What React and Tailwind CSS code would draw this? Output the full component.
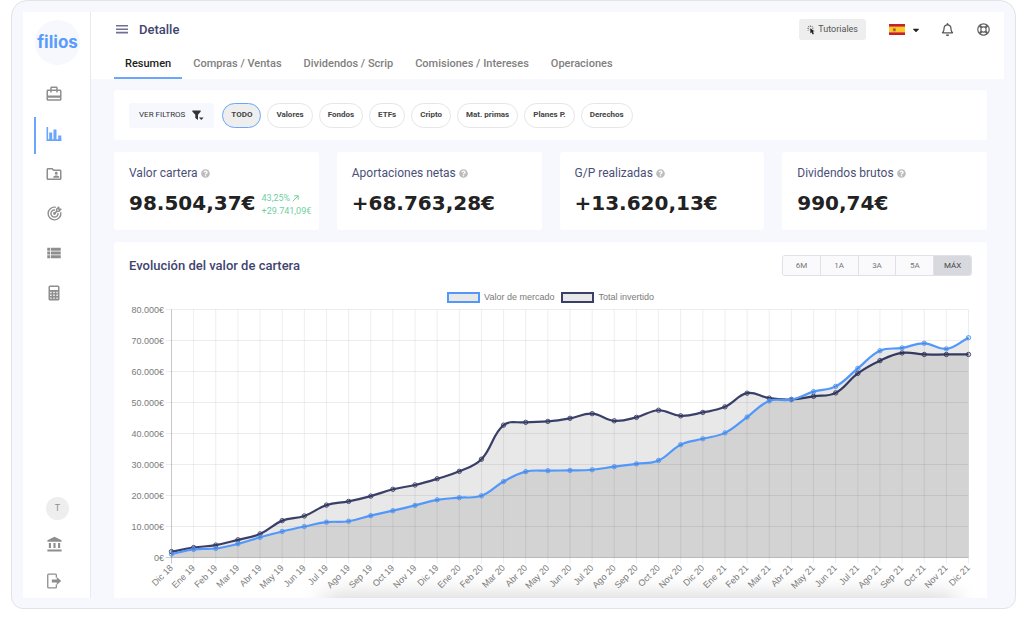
import { useState } from 'react';
import { FaRegLifeRing, FaCaretDown, FaQuestionCircle, FaRegBell } from 'react-icons/fa';
import { MdCardTravel, MdOutlineFolderShared, MdViewList, MdAccountBalance } from 'react-icons/md';
import { TbTargetArrow } from 'react-icons/tb';

const TABS = ['Resumen', 'Compras / Ventas', 'Dividendos / Scrip', 'Comisiones / Intereses', 'Operaciones'];
const FILTERS = ['TODO', 'Valores', 'Fondos', 'ETFs', 'Cripto', 'Mat. primas', 'Planes P.', 'Derechos'];
const RANGES = ['6M', '1A', '3A', '5A', 'MÁX'];

const KPIS = [
  { label: 'Valor cartera', value: '98.504,37€', percent: '43,25%', diff: '+29.741,09€' },
  { label: 'Aportaciones netas', value: '+68.763,28€' },
  { label: 'G/P realizadas', value: '+13.620,13€' },
  { label: 'Dividendos brutos', value: '990,74€' },
];

const MONTHS = ['Ene', 'Feb', 'Mar', 'Abr', 'May', 'Jun', 'Jul', 'Ago', 'Sep', 'Oct', 'Nov', 'Dic'];
const LABELS = ['Dic 18', ...[19, 20, 21].flatMap((y) => MONTHS.map((m) => `${m} ${y}`))];

// thousands of euros, one value per month
const MERCADO = [
  1.1, 2.6, 2.9, 4.4, 6.5, 8.4, 10, 11.4, 11.7, 13.5, 15.1, 16.8, 18.6, 19.3, 19.9, 24.5, 27.7, 28, 28.1,
  28.3, 29.3, 30.2, 31.3, 36.4, 38.3, 40.2, 45.3, 50.5, 50.9, 53.5, 55.2, 61, 66.7, 67.6, 69.1, 67.3, 70.9,
];
const INVERTIDO = [
  1.9, 3.2, 4, 5.7, 7.6, 11.9, 13.4, 16.9, 18.1, 19.8, 22, 23.4, 25.4, 27.8, 31.7, 42.7, 43.6, 43.9, 44.9,
  46.4, 44.1, 45.2, 47.5, 45.7, 46.8, 48.6, 53, 51.4, 51, 52, 53.1, 59.4, 63.5, 66, 65.5, 65.5, 65.5,
];

const LEFT = 42.5;
const RIGHT = 839.5;
const TOP = 6.5;
const BOTTOM = 254.5;
const xAt = (i) => LEFT + (i * (RIGHT - LEFT)) / (LABELS.length - 1);
const yAt = (v) => BOTTOM - (v * (BOTTOM - TOP)) / 80;

// cardinal spline with a tension of 0.4
function smoothPath(values) {
  const pts = values.map((v, i) => [xAt(i), yAt(v)]);
  const ctrl = pts.map((p, i) => {
    const prev = pts[i - 1] || p;
    const next = pts[i + 1] || p;
    const d01 = Math.hypot(p[0] - prev[0], p[1] - prev[1]);
    const d12 = Math.hypot(next[0] - p[0], next[1] - p[1]);
    const fa = (0.4 * d01) / (d01 + d12);
    const fb = (0.4 * d12) / (d01 + d12);
    const dx = next[0] - prev[0];
    const dy = next[1] - prev[1];
    return { before: [p[0] - fa * dx, p[1] - fa * dy], after: [p[0] + fb * dx, p[1] + fb * dy] };
  });
  return pts
    .map((p, i) => (i === 0 ? `M${p}` : `C${ctrl[i - 1].after} ${ctrl[i].before} ${p}`))
    .join(' ');
}

function Series({ values, color }) {
  const line = smoothPath(values);
  return (
    <g>
      <path d={`${line} L${RIGHT},${BOTTOM} L${LEFT},${BOTTOM}Z`} fill="#000" fillOpacity="0.09" />
      <path d={line} fill="none" stroke={color} strokeWidth="2.2" />
      {values.map((v, i) => (
        <circle key={i} cx={xAt(i)} cy={yAt(v)} r="2.2" fill="#000" fillOpacity="0.1" stroke={color} strokeWidth="0.9" />
      ))}
    </g>
  );
}

function Chart() {
  return (
    <svg viewBox="0 0 843 295" className="block w-full" role="img" aria-label="Evolución del valor de cartera">
      {LABELS.map((l, i) => (
        <line key={l} x1={xAt(i)} x2={xAt(i)} y1={TOP} y2={BOTTOM + 6} stroke="#000" strokeOpacity={i === 0 ? 0.22 : 0.07} />
      ))}
      {[0, 10, 20, 30, 40, 50, 60, 70, 80].map((v) => (
        <g key={v}>
          <line x1={LEFT - 6} x2={RIGHT} y1={yAt(v)} y2={yAt(v)} stroke="#000" strokeOpacity={v === 0 ? 0.2 : 0.07} />
          <text x="35" y={yAt(v) + 3} textAnchor="end" className="fill-[#7a7a7a] font-['Liberation_Sans',sans-serif] text-[9px]">
            {v === 0 ? '0€' : `${v}.000€`}
          </text>
        </g>
      ))}
      <Series values={INVERTIDO} color="#3a3f69" />
      <Series values={MERCADO} color="#5298fb" />
      {LABELS.map((l, i) => (
        <text
          key={l}
          transform={`translate(${xAt(i) + 2} ${BOTTOM + 11}) rotate(-45)`}
          textAnchor="end"
          className="fill-[#7a7a7a] font-['Liberation_Sans',sans-serif] text-[9px]"
        >
          {l}
        </text>
      ))}
    </svg>
  );
}

function MenuIcon() {
  return (
    <svg width="12" height="9" viewBox="0 0 12 9" fill="#6d7193">
      <path d="M0 0h12v1.600H0zM0 3.400h12V5H0zM0 6.800h12v1.600H0z" />
    </svg>
  );
}

function HistogramIcon() {
  return (
    <svg width="16" height="16" viewBox="0 0 16 16" fill="currentColor">
      <path d="M.5 1h1.600v12.300H15.500v1.600H.5zM3.200 6.500h3v6.800h-3zM7.500 3.500h3v9.800h-3zM12.200 9.400h3.100v3.900h-3.100z" />
    </svg>
  );
}

function CalculatorIcon() {
  return (
    <svg width="16" height="16" viewBox="0 0 16 16" fill="currentColor">
      <path
        fillRule="evenodd"
        d="M4 .5h8A1.500 1.500 0 0 1 13.500 2v12a1.500 1.500 0 0 1-1.500 1.500H4A1.500 1.500 0 0 1 2.500 14V2A1.500 1.500 0 0 1 4 .5zM4 2v3h8V2zM4.200 6.800v1.400h1.400V6.800zM7.300 6.800v1.400h1.400V6.800zM10.400 6.800v1.400h1.400V6.800zM4.200 9.600V11h1.400V9.600zM7.300 9.600V11h1.400V9.600zM10.400 9.600V11h1.400V9.600zM4.200 12.400v1.400h1.400v-1.400zM7.300 12.400v1.400h1.400v-1.400zM10.400 12.400v1.400h1.400v-1.400z"
      />
    </svg>
  );
}

function ExitIcon() {
  return (
    <svg width="16" height="16" viewBox="0 0 16 16" fill="currentColor">
      <path d="M2.600.5h6.900a1.500 1.500 0 0 1 1.500 1.500v2.600H9.700V1.800H2.400v12.400h7.300v-2.800H11V14a1.500 1.500 0 0 1-1.500 1.500H2.600A1.500 1.500 0 0 1 1.100 14V2A1.500 1.500 0 0 1 2.600.5z" />
      <path d="M5.800 6.600h5V4l4.400 4-4.400 4V9.400h-5z" />
    </svg>
  );
}

function FunnelIcon() {
  return (
    <svg width="12" height="11" viewBox="0 0 12 11" fill="currentColor">
      <path d="M.3.500h8.400v.9L6 4.800v5.200L3.300 8V4.800L.3 1.400zM7 7.500h4.600L9.300 9.900z" />
    </svg>
  );
}

function ClickIcon() {
  return (
    <svg width="8" height="10" viewBox="0 0 8 10">
      <path d="M3.200 3.300 7.600 6.200l-1.700.4 1 2.100-1.300.7-1-2.100-1.200 1.100z" fill="#222" />
      <path d="M3.300.4v1.500M.4 3.300h1.500M1.200 1.200l1 1M5.500 1.100l-.9 1M1 5.600l1-1M6.500 3.200H5.200" stroke="#444" strokeWidth=".8" />
    </svg>
  );
}

function SpainFlag() {
  return (
    <svg width="16" height="11" viewBox="0 0 16 11">
      <rect width="16" height="11" fill="#c8202b" />
      <rect y="2.600" width="16" height="5.800" fill="#fcc92c" />
      <path d="M3.800 4.200h3.100v3.200H3.800z" fill="#c98a35" />
      <path d="M4.500 4.800h1.700v1.900H4.500z" fill="#9a4a35" />
    </svg>
  );
}

const NAV = [
  { name: 'Cartera', icon: <MdCardTravel size={18} /> },
  { name: 'Detalle', icon: <HistogramIcon />, active: true },
  { name: 'Carteras compartidas', icon: <MdOutlineFolderShared size={18} /> },
  { name: 'Objetivos', icon: <TbTargetArrow size={17} strokeWidth={2} /> },
  { name: 'Listado', icon: <MdViewList size={18} /> },
  { name: 'Calculadora', icon: <CalculatorIcon /> },
];

function Sidebar() {
  return (
    <aside className="flex w-[68px] shrink-0 flex-col border-r border-[#e9eaee] bg-white pt-2">
      <a
        href="#"
        className="ml-3 flex size-[45px] items-center justify-center rounded-full bg-[#f7f8fd] font-['Inter',sans-serif] text-[17px] font-bold text-[#5a9cfc]"
      >
        filios
      </a>
      <nav className="mt-[9px] flex h-[239px] flex-col">
        {NAV.map((item) => (
          <a key={item.name} href="#" aria-label={item.name} className={`flex flex-1 items-center ${item.active ? 'text-[#6ba6fb]' : 'text-[#8e8e8e]'}`}>
            <span className={`ml-[11px] h-[37px] w-[2px] self-end ${item.active ? 'bg-[#6ba6fb]' : ''}`} />
            <span className="flex w-9 justify-center">{item.icon}</span>
          </a>
        ))}
      </nav>
      <div className="mt-auto flex flex-col text-[#8e8e8e]">
        <button aria-label="Usuario" className="ml-[23px] flex size-[23px] items-center justify-center rounded-full bg-[#eeeeee] text-[9px]">
          T
        </button>
        <a href="#" aria-label="Bancos" className="ml-[13px] mt-1 flex h-10 w-9 items-center justify-center">
          <MdAccountBalance size={17} />
        </a>
        <button aria-label="Salir" className="ml-[13px] flex h-[34px] w-9 items-center justify-center">
          <ExitIcon />
        </button>
      </div>
    </aside>
  );
}

function Header({ tab, setTab }) {
  return (
    <header className="flex flex-col bg-white">
      <div className="flex h-[35px] items-center pl-[25px] pr-[14px]">
        <button aria-label="Menú">
          <MenuIcon />
        </button>
        <h1 className="ml-[11px] text-[13px] leading-5 font-medium text-[#3f4470]">Detalle</h1>
        <div className="ml-auto flex items-center">
          <button className="flex h-[21px] items-center gap-[3px] rounded-[3px] bg-[#eeeeee] px-2 text-[9px] text-[#555]">
            <ClickIcon />
            Tutoriales
          </button>
          <button aria-label="Idioma" className="ml-[23px] flex items-center gap-[6px] text-[#222]">
            <SpainFlag />
            <FaCaretDown size={10} />
          </button>
          <button aria-label="Notificaciones" className="ml-5 text-[#555]">
            <FaRegBell size={13} />
          </button>
          <button aria-label="Ayuda" className="ml-[23px] text-[#666]">
            <FaRegLifeRing size={13} />
          </button>
        </div>
      </div>
      <nav className="flex h-8 pl-[23px]">
        {TABS.map((t) => (
          <button
            key={t}
            onClick={() => setTab(t)}
            className={`border-b-2 px-[11px] pt-1 text-[11px] font-medium ${
              t === tab ? 'border-[#6ba6fb] text-[#222]' : 'border-transparent text-[#808080]'
            }`}
          >
            {t}
          </button>
        ))}
      </nav>
    </header>
  );
}

function Kpi({ label, value, percent, diff }) {
  return (
    <section className="h-[78px] rounded-[3px] bg-white pl-[15px] pt-[13px]">
      <h2 className="flex items-center gap-[3px] text-xs text-[#4a4f78]">
        {label}
        <FaQuestionCircle size={9} className="text-[#bcbcbc]" />
      </h2>
      <div className="mt-[7px] flex items-center gap-[6px]">
        <span className="font-['DejaVu_Sans',sans-serif] text-xl leading-[30px] font-bold text-[#222]">{value}</span>
        {percent && (
          <span className="pt-1 text-[9px] leading-[13px] text-[#6fcf9f]">
            <span className="flex items-center gap-[2px]">
              {percent}
              <svg width="7" height="7" viewBox="0 0 7 7" fill="none" stroke="currentColor">
                <path d="M.7 6.300 6.200.8M2.200.8h4v4" />
              </svg>
            </span>
            {diff}
          </span>
        )}
      </div>
    </section>
  );
}

function LegendItem({ label, box }) {
  return (
    <span className="flex items-center gap-1">
      <span className={`h-[11px] w-[33px] border-2 bg-[#e8e8e8] ${box}`} />
      {label}
    </span>
  );
}

export default function App() {
  const [tab, setTab] = useState('Resumen');
  const [filter, setFilter] = useState('TODO');
  const [range, setRange] = useState('MÁX');

  return (
    <div className="bg-white pb-[10px] pl-[11px] pr-2 font-['Roboto',sans-serif]">
      <div className="flex rounded-b-xl rounded-t-2xl border border-[#e2e3e5] bg-[#f7f8fd] px-[11px] pb-[10px] pt-[11px]">
        <Sidebar />
        <div className="min-w-0 flex-1">
          <Header tab={tab} setTab={setTab} />
          <main className="flex flex-col gap-3 pl-[23px] pr-[17px] pt-[11px]">
            <div className="flex h-[50px] items-center gap-[6px] rounded-[3px] bg-white px-[15px]">
              <button className="mr-[2px] flex h-[25px] items-center gap-[7px] rounded-[3px] bg-[#f7f8fd] px-[10px] text-[8px] text-[#333]">
                VER FILTROS
                <FunnelIcon />
              </button>
              {FILTERS.map((f) => (
                <button
                  key={f}
                  onClick={() => setFilter(f)}
                  className={`h-[25px] rounded-full border px-2 text-[8px] font-bold text-[#444] ${
                    f === filter ? 'border-[#6ba6fb] bg-[#eeeeee]' : 'border-[#e6e6e6] bg-white'
                  }`}
                >
                  {f}
                </button>
              ))}
            </div>

            <div className="grid grid-cols-4 gap-[18px]">
              {KPIS.map((k) => (
                <Kpi key={k.label} {...k} />
              ))}
            </div>

            <section className="relative overflow-hidden rounded-t-[3px] bg-white px-[15px] pt-[13px]">
              <div className="flex items-center justify-between">
                <h2 className="text-[13px] leading-5 font-medium text-[#3f4470]">Evolución del valor de cartera</h2>
                <div className="flex h-[21px] w-[190px] overflow-hidden rounded-[3px] border border-[#e0e1e5]">
                  {RANGES.map((r) => (
                    <button
                      key={r}
                      onClick={() => setRange(r)}
                      className={`flex-1 border-r border-[#e0e1e5] text-[8px] last:border-r-0 ${
                        r === range ? 'bg-[#d8d9de] text-[#444]' : 'bg-[#fafafc] text-[#777]'
                      }`}
                    >
                      {r}
                    </button>
                  ))}
                </div>
              </div>
              <div className="mt-4 flex justify-center gap-[7px] font-['Liberation_Sans',sans-serif] text-[9px] leading-[11px] text-[#7a7a7a]">
                <LegendItem label="Valor de mercado" box="border-[#5298fb]" />
                <LegendItem label="Total invertido" box="border-[#3a3f69]" />
              </div>
              <Chart />
              <div className="pointer-events-none absolute top-full right-8 left-[210px] h-5 shadow-[0_0_24px_rgba(0,0,0,0.22)]" />
            </section>
          </main>
        </div>
      </div>
    </div>
  );
}
